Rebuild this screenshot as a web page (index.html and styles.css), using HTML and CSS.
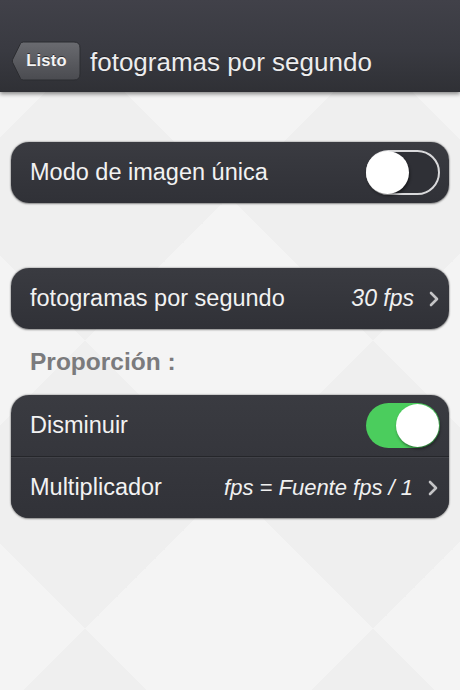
FILE: index.html
```html
<!DOCTYPE html>
<html lang="es">
<head>
<meta charset="utf-8">
<title>fotogramas por segundo</title>
<link rel="stylesheet" href="styles.css">
</head>
<body>
<header class="navbar">
  <a class="back" href="#">
    <svg class="back-shape" width="70" height="40" viewBox="0 0 70 40">
      <defs>
        <linearGradient id="bg" x1="0" y1="0" x2="0" y2="1">
          <stop offset="0" stop-color="#6a6b70"/>
          <stop offset="1" stop-color="#4a4b50"/>
        </linearGradient>
      </defs>
      <path d="M12.5 1 H63 Q69 1 69 7 V33 Q69 39 63 39 H12.5 Q10.5 39 9.5 37.5 L1.6 21.5 Q1 20 1.6 18.5 L9.5 2.5 Q10.5 1 12.5 1 Z" fill="url(#bg)" stroke="#2b2c30" stroke-width="1"/>
    </svg>
    <span class="back-label">Listo</span>
  </a>
  <h1 class="title">fotogramas por segundo</h1>
</header>

<main class="content">
  <section class="card">
    <div class="row">
      <span class="row-label">Modo de imagen única</span>
      <span class="switch"><span class="knob"></span></span>
    </div>
  </section>

  <section class="card card-second">
    <div class="row">
      <span class="row-label">fotogramas por segundo</span>
      <span class="row-value">30 fps</span>
      <svg class="chevron" width="10" height="16" viewBox="0 0 10 16"><polyline points="2,2 8,8 2,14" fill="none" stroke="#c4c4c6" stroke-width="2.6" stroke-linecap="round" stroke-linejoin="round"/></svg>
    </div>
  </section>

  <h2 class="section-title">Proporción :</h2>

  <section class="card">
    <div class="row">
      <span class="row-label">Disminuir</span>
      <span class="switch switch-on"><span class="knob"></span></span>
    </div>
    <div class="row row-divided">
      <span class="row-label">Multiplicador</span>
      <span class="row-value row-value-long">fps = Fuente fps / 1</span>
      <svg class="chevron" width="10" height="16" viewBox="0 0 10 16"><polyline points="2,2 8,8 2,14" fill="none" stroke="#c4c4c6" stroke-width="2.6" stroke-linecap="round" stroke-linejoin="round"/></svg>
    </div>
  </section>
</main>
</body>
</html>
```

FILE: styles.css
```css
html, body {
  margin: 0;
  padding: 0;
}

body {
  width: 460px;
  height: 690px;
  overflow: hidden;
  font-family: "Liberation Sans", Arial, sans-serif;
  background-color: #efefef;
  background-image:
    linear-gradient(45deg, rgba(255,255,255,0.3) 25%, transparent 25%, transparent 75%, rgba(255,255,255,0.3) 75%),
    linear-gradient(-45deg, rgba(255,255,255,0.3) 25%, transparent 25%, transparent 75%, rgba(255,255,255,0.3) 75%);
  background-size: 288px 288px;
  background-position: -59px 53px;
}

.navbar {
  height: 92px;
  box-sizing: border-box;
  padding: 41px 0 0 11px;
  display: flex;
  align-items: flex-start;
  gap: 9px;
  background: linear-gradient(#414149 0%, #393a41 55%, #2f3035 100%);
  box-shadow: 0 2px 4px rgba(0,0,0,0.45);
  position: relative;
}

.back {
  display: grid;
  width: 70px;
  height: 40px;
  text-decoration: none;
}

.back-shape,
.back-label {
  grid-area: 1 / 1;
}

.back-label {
  align-self: center;
  justify-self: center;
  margin-left: 1px;
  margin-top: -1px;
  color: #f4f4f4;
  font-size: 16.5px;
  font-weight: bold;
  letter-spacing: 0.2px;
  text-shadow: 0 -1px 0 rgba(0,0,0,0.5);
}

.title {
  margin: 0;
  line-height: 42px;
  font-size: 26px;
  font-weight: normal;
  color: #ededee;
  text-shadow: 0 -1px 0 rgba(0,0,0,0.4);
}

.content {
  padding: 50px 11px 0 11px;
}

.card {
  border-radius: 18px;
  background: linear-gradient(#3a3b41, #303137);
  box-shadow: 0 0 2px rgba(0,0,0,0.55), 0 1px 2px rgba(0,0,0,0.3);
  overflow: hidden;
}

.card-second {
  margin-top: 65px;
}

.row {
  height: 61px;
  box-sizing: border-box;
  display: flex;
  align-items: center;
  padding: 0 9px 0 19px;
}

.row-divided {
  height: 62px;
  border-top: 1px solid #25262a;
  box-shadow: inset 0 1px 0 rgba(255,255,255,0.06);
  background: linear-gradient(#36373d, #313238);
  padding-right: 10px;
}

.row-label {
  flex: 1;
  font-size: 23.5px;
  color: #f2f2f2;
}

.row-value {
  font-size: 23px;
  font-style: italic;
  color: #f0f0f0;
  margin-right: 15px;
}

.row-value-long {
  font-size: 22px;
}

.chevron {
  flex: none;
  margin-right: 1px;
}

.switch {
  flex: none;
  width: 74px;
  height: 45px;
  box-sizing: border-box;
  border-radius: 23px;
  border: 2px solid #d9d9db;
  background: #2f3036;
  display: flex;
  align-items: center;
  padding: 0;
}

.knob {
  width: 43px;
  height: 43px;
  margin-left: -2px;
  border-radius: 50%;
  background: #ffffff;
  box-shadow: 1px 2px 3px rgba(0,0,0,0.45);
}

.switch-on {
  border: none;
  background: #4bcd5d;
  justify-content: flex-end;
  padding-right: 1px;
}

.switch-on .knob {
  margin-left: 0;
}

.section-title {
  margin: 0;
  height: 66px;
  line-height: 66px;
  padding-left: 19px;
  font-size: 24.5px;
  font-weight: bold;
  color: #7b7b7d;
}
```
